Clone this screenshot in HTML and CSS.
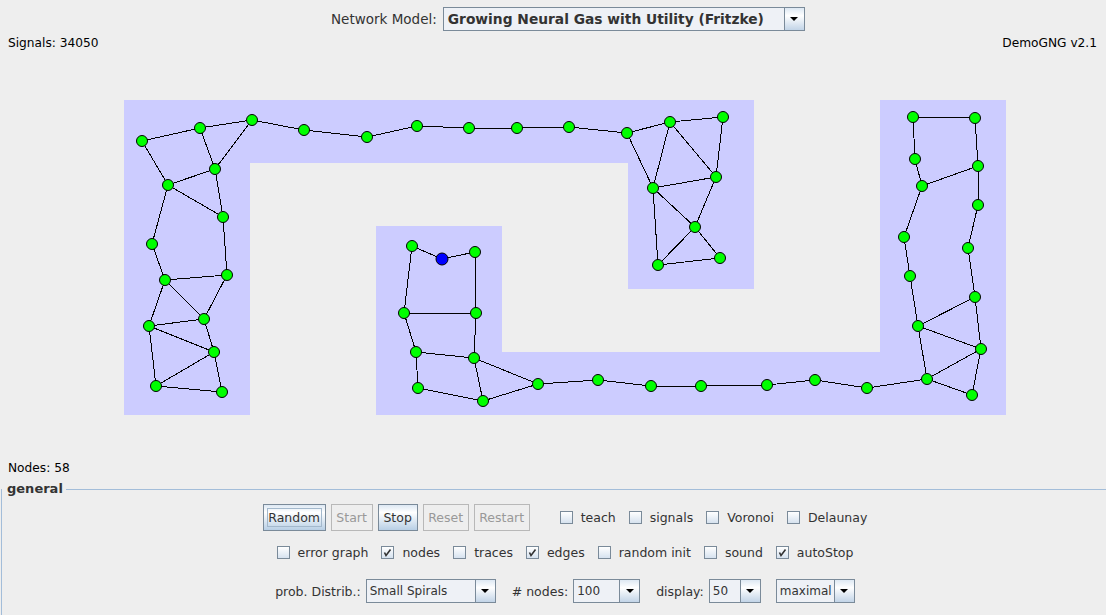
FILE: index.html
```html
<!DOCTYPE html>
<html>
<head>
<meta charset="utf-8">
<link rel="stylesheet" href="styles.css">
</head>
<body>
<div class="topbar">
  <span class="lbl">Network Model:</span>
  <div class="combo combo-main">
    <span class="combo-text bold">Growing Neural Gas with Utility (Fritzke)</span>
    <span class="arrow-btn"><svg width="8" height="4" viewBox="0 0 8 4"><path d="M0 0H8L4 4Z" fill="#000"/></svg></span>
  </div>
</div>

<div class="canvas">
  <div class="canvas-head"><span>Signals: 34050</span><span>DemoGNG v2.1</span></div>
  <svg class="graph" width="1106" height="406" viewBox="0 52 1106 406">
    <g fill="#CCCCFF">
      <rect x="124" y="100" width="126" height="315"/>
      <rect x="124" y="100" width="630" height="63"/>
      <rect x="628" y="100" width="126" height="189"/>
      <rect x="376" y="226" width="126" height="189"/>
      <rect x="376" y="352" width="630" height="63"/>
      <rect x="880" y="100" width="126" height="315"/>
    </g>
    <g class="edges" stroke="#000" stroke-width="1">
      <line x1="142" y1="141" x2="200" y2="128"/>
      <line x1="200" y1="128" x2="252" y2="120"/>
      <line x1="252" y1="120" x2="304" y2="130"/>
      <line x1="304" y1="130" x2="367" y2="137"/>
      <line x1="142" y1="141" x2="168" y2="185"/>
      <line x1="200" y1="128" x2="215" y2="169"/>
      <line x1="252" y1="120" x2="215" y2="169"/>
      <line x1="215" y1="169" x2="168" y2="185"/>
      <line x1="168" y1="185" x2="223" y2="217"/>
      <line x1="215" y1="169" x2="223" y2="217"/>
      <line x1="168" y1="185" x2="152" y2="244"/>
      <line x1="223" y1="217" x2="227" y2="275"/>
      <line x1="152" y1="244" x2="165" y2="280"/>
      <line x1="165" y1="280" x2="227" y2="275"/>
      <line x1="165" y1="280" x2="204" y2="319"/>
      <line x1="227" y1="275" x2="204" y2="319"/>
      <line x1="165" y1="280" x2="149" y2="326"/>
      <line x1="149" y1="326" x2="204" y2="319"/>
      <line x1="204" y1="319" x2="214" y2="352"/>
      <line x1="149" y1="326" x2="214" y2="352"/>
      <line x1="149" y1="326" x2="156" y2="386"/>
      <line x1="156" y1="386" x2="214" y2="352"/>
      <line x1="214" y1="352" x2="222" y2="392"/>
      <line x1="156" y1="386" x2="222" y2="392"/>

      <line x1="367" y1="137" x2="417" y2="126"/>
      <line x1="417" y1="126" x2="469" y2="128"/>
      <line x1="469" y1="128" x2="517" y2="128"/>
      <line x1="517" y1="128" x2="569" y2="127"/>
      <line x1="569" y1="127" x2="627" y2="133"/>
      <line x1="627" y1="133" x2="670" y2="122"/>
      <line x1="670" y1="122" x2="723" y2="117"/>
      <line x1="627" y1="133" x2="653" y2="188"/>
      <line x1="670" y1="122" x2="653" y2="188"/>
      <line x1="670" y1="122" x2="716" y2="177"/>
      <line x1="723" y1="117" x2="716" y2="177"/>
      <line x1="653" y1="188" x2="716" y2="177"/>
      <line x1="653" y1="188" x2="695" y2="227"/>
      <line x1="716" y1="177" x2="695" y2="227"/>
      <line x1="653" y1="188" x2="658" y2="265"/>
      <line x1="695" y1="227" x2="658" y2="265"/>
      <line x1="695" y1="227" x2="720" y2="258"/>
      <line x1="658" y1="265" x2="720" y2="258"/>

      <line x1="412" y1="246" x2="442" y2="259"/>
      <line x1="442" y1="259" x2="475" y2="252"/>
      <line x1="412" y1="246" x2="404" y2="313"/>
      <line x1="475" y1="252" x2="476" y2="313"/>
      <line x1="404" y1="313" x2="476" y2="313"/>
      <line x1="404" y1="313" x2="416" y2="352"/>
      <line x1="476" y1="313" x2="474" y2="358"/>
      <line x1="416" y1="352" x2="474" y2="358"/>
      <line x1="416" y1="352" x2="418" y2="388"/>
      <line x1="474" y1="358" x2="483" y2="401"/>
      <line x1="418" y1="388" x2="483" y2="401"/>
      <line x1="474" y1="358" x2="538" y2="384"/>
      <line x1="483" y1="401" x2="538" y2="384"/>

      <line x1="538" y1="384" x2="598" y2="380"/>
      <line x1="598" y1="380" x2="651" y2="386"/>
      <line x1="651" y1="386" x2="701" y2="386"/>
      <line x1="701" y1="386" x2="767" y2="385"/>
      <line x1="767" y1="385" x2="815" y2="380"/>
      <line x1="815" y1="380" x2="867" y2="388"/>
      <line x1="867" y1="388" x2="927" y2="379"/>

      <line x1="913" y1="117" x2="975" y2="118"/>
      <line x1="913" y1="117" x2="915" y2="159"/>
      <line x1="975" y1="118" x2="978" y2="166"/>
      <line x1="915" y1="159" x2="922" y2="186"/>
      <line x1="978" y1="166" x2="922" y2="186"/>
      <line x1="978" y1="166" x2="978" y2="205"/>
      <line x1="978" y1="205" x2="968" y2="248"/>
      <line x1="922" y1="186" x2="904" y2="237"/>
      <line x1="904" y1="237" x2="910" y2="276"/>
      <line x1="968" y1="248" x2="975" y2="297"/>
      <line x1="910" y1="276" x2="918" y2="326"/>
      <line x1="975" y1="297" x2="918" y2="326"/>
      <line x1="975" y1="297" x2="981" y2="349"/>
      <line x1="918" y1="326" x2="981" y2="349"/>
      <line x1="918" y1="326" x2="927" y2="379"/>
      <line x1="981" y1="349" x2="927" y2="379"/>
      <line x1="981" y1="349" x2="972" y2="395"/>
      <line x1="927" y1="379" x2="972" y2="395"/>
    </g>
    <g class="nodes" fill="#00FF00" stroke="#000" stroke-width="1">
      <circle cx="142" cy="141" r="5.5"/>
      <circle cx="200" cy="128" r="5.5"/>
      <circle cx="252" cy="120" r="5.5"/>
      <circle cx="304" cy="130" r="5.5"/>
      <circle cx="367" cy="137" r="5.5"/>
      <circle cx="215" cy="169" r="5.5"/>
      <circle cx="168" cy="185" r="5.5"/>
      <circle cx="223" cy="217" r="5.5"/>
      <circle cx="152" cy="244" r="5.5"/>
      <circle cx="227" cy="275" r="5.5"/>
      <circle cx="165" cy="280" r="5.5"/>
      <circle cx="204" cy="319" r="5.5"/>
      <circle cx="149" cy="326" r="5.5"/>
      <circle cx="214" cy="352" r="5.5"/>
      <circle cx="156" cy="386" r="5.5"/>
      <circle cx="222" cy="392" r="5.5"/>

      <circle cx="417" cy="126" r="5.5"/>
      <circle cx="469" cy="128" r="5.5"/>
      <circle cx="517" cy="128" r="5.5"/>
      <circle cx="569" cy="127" r="5.5"/>
      <circle cx="627" cy="133" r="5.5"/>
      <circle cx="670" cy="122" r="5.5"/>
      <circle cx="723" cy="117" r="5.5"/>
      <circle cx="653" cy="188" r="5.5"/>
      <circle cx="716" cy="177" r="5.5"/>
      <circle cx="695" cy="227" r="5.5"/>
      <circle cx="658" cy="265" r="5.5"/>
      <circle cx="720" cy="258" r="5.5"/>

      <circle cx="412" cy="246" r="5.5"/>
      <circle cx="475" cy="252" r="5.5"/>
      <circle cx="404" cy="313" r="5.5"/>
      <circle cx="476" cy="313" r="5.5"/>
      <circle cx="416" cy="352" r="5.5"/>
      <circle cx="474" cy="358" r="5.5"/>
      <circle cx="418" cy="388" r="5.5"/>
      <circle cx="483" cy="401" r="5.5"/>
      <circle cx="538" cy="384" r="5.5"/>

      <circle cx="598" cy="380" r="5.5"/>
      <circle cx="651" cy="386" r="5.5"/>
      <circle cx="701" cy="386" r="5.5"/>
      <circle cx="767" cy="385" r="5.5"/>
      <circle cx="815" cy="380" r="5.5"/>
      <circle cx="867" cy="388" r="5.5"/>

      <circle cx="913" cy="117" r="5.5"/>
      <circle cx="975" cy="118" r="5.5"/>
      <circle cx="915" cy="159" r="5.5"/>
      <circle cx="978" cy="166" r="5.5"/>
      <circle cx="922" cy="186" r="5.5"/>
      <circle cx="978" cy="205" r="5.5"/>
      <circle cx="904" cy="237" r="5.5"/>
      <circle cx="968" cy="248" r="5.5"/>
      <circle cx="910" cy="276" r="5.5"/>
      <circle cx="975" cy="297" r="5.5"/>
      <circle cx="918" cy="326" r="5.5"/>
      <circle cx="981" cy="349" r="5.5"/>
      <circle cx="927" cy="379" r="5.5"/>
      <circle cx="972" cy="395" r="5.5"/>
      <circle cx="442" cy="259" r="6" fill="#0000FF"/>
    </g>
  </svg>
  <div class="canvas-foot">Nodes: 58</div>
</div>

<fieldset class="general">
  <legend>general</legend>
  <div class="row row1">
    <div class="btns">
      <button class="btn b-random focus"><span>Random</span></button>
      <button class="btn b-start" disabled>Start</button>
      <button class="btn b-stop">Stop</button>
      <button class="btn b-reset" disabled>Reset</button>
      <button class="btn b-restart" disabled>Restart</button>
    </div>
    <div class="chks first">
      <label class="chk"><span class="box"></span>teach</label>
      <label class="chk"><span class="box"></span>signals</label>
      <label class="chk"><span class="box"></span>Voronoi</label>
      <label class="chk"><span class="box"></span>Delaunay</label>
    </div>
  </div>
  <div class="row row2">
    <div class="chks">
      <label class="chk"><span class="box"></span>error graph</label>
      <label class="chk"><span class="box"><svg width="11" height="11" viewBox="0 0 11 11"><path d="M2.5 5.5L4 8.5L8.5 2.5" fill="none" stroke="#333" stroke-width="1.6"/></svg></span>nodes</label>
      <label class="chk"><span class="box"></span>traces</label>
      <label class="chk"><span class="box"><svg width="11" height="11" viewBox="0 0 11 11"><path d="M2.5 5.5L4 8.5L8.5 2.5" fill="none" stroke="#333" stroke-width="1.6"/></svg></span>edges</label>
      <label class="chk"><span class="box"></span>random init</label>
      <label class="chk"><span class="box"></span>sound</label>
      <label class="chk"><span class="box"><svg width="11" height="11" viewBox="0 0 11 11"><path d="M2.5 5.5L4 8.5L8.5 2.5" fill="none" stroke="#333" stroke-width="1.6"/></svg></span>autoStop</label>
    </div>
  </div>
  <div class="row row3">
    <span class="lbl">prob. Distrib.:</span>
    <div class="combo w-distrib">
      <span class="combo-text">Small Spirals</span>
      <span class="arrow-btn"><svg width="8" height="4" viewBox="0 0 8 4"><path d="M0 0H8L4 4Z" fill="#000"/></svg></span>
    </div>
    <span class="lbl sp"># nodes:</span>
    <div class="combo w-nodes">
      <span class="combo-text">100</span>
      <span class="arrow-btn"><svg width="8" height="4" viewBox="0 0 8 4"><path d="M0 0H8L4 4Z" fill="#000"/></svg></span>
    </div>
    <span class="lbl sp">display:</span>
    <div class="combo w-display">
      <span class="combo-text">50</span>
      <span class="arrow-btn"><svg width="8" height="4" viewBox="0 0 8 4"><path d="M0 0H8L4 4Z" fill="#000"/></svg></span>
    </div>
    <div class="combo w-max sp2">
      <span class="combo-text">maximal</span>
      <span class="arrow-btn"><svg width="8" height="4" viewBox="0 0 8 4"><path d="M0 0H8L4 4Z" fill="#000"/></svg></span>
    </div>
  </div>
</fieldset>
</body>
</html>
```

FILE: styles.css
```css
* { box-sizing: border-box; }
html, body { margin: 0; padding: 0; }
body {
  width: 1106px;
  height: 615px;
  overflow: hidden;
  background: #EEEEEE;
  font-family: "DejaVu Sans", sans-serif;
  font-size: 12.5px;
  color: #333333;
}

.topbar {
  height: 34px;
  display: flex;
  align-items: flex-start;
  padding: 7px 0 0 331px;
  gap: 6px;
  font-size: 13.5px;
}
.topbar .lbl { line-height: 24px; }

.combo {
  display: flex;
  height: 24px;
  border: 1px solid #7A8A99;
  background: #EEF1F6;
}
.combo-text {
  flex: 1;
  display: flex;
  align-items: center;
  padding-left: 3px;
  white-space: nowrap;
  overflow: hidden;
  font-size: 12px;
}
.combo-text.bold { font-weight: bold; padding-left: 4px; font-size: 13.8px; }
.arrow-btn {
  width: 20px;
  flex: none;
  border-left: 1px solid #7A8A99;
  background: linear-gradient(#DDE8F3, #FFFFFF 35%, #C2D4E7);
  display: flex;
  align-items: center;
  justify-content: center;
}
.combo-main { width: 362px; }

.canvas {
  display: flex;
  flex-direction: column;
  color: #000;
  font-size: 12.2px;
}
.canvas-head {
  height: 18px;
  display: flex;
  justify-content: space-between;
  align-items: center;
  padding: 0 9px 0 8px;
}
.graph { display: block; }
.edges { shape-rendering: crispEdges; }
.canvas-foot {
  height: 20px;
  line-height: 20px;
  padding-left: 8px;
}

.general {
  width: 1105px;
  height: 137px;
  margin: 0 0 0 1px;
  padding: 4px 0 0 22px;
  border: 1px solid #A3BDD9;
  border-right: none;
  border-bottom: none;
}
.general legend {
  font-weight: bold;
  font-size: 13px;
  line-height: 22px;
  padding: 0 3px 0 5px;
  margin: 0 0 0 -22px;
}

.row {
  display: flex;
  justify-content: center;
  align-items: center;
}
.row1 { height: 27px; }
.row2 { height: 21px; margin-top: 11px; }
.row3 { height: 24px; margin-top: 16px; }

.btns { display: flex; gap: 5px; }
.btn {
  height: 27px;
  padding: 0;
  text-align: center;
  font: inherit;
  color: #333333;
  border: 1px solid #7A8A99;
  background: linear-gradient(#DDE8F3, #FFFFFF 30%, #B8CFE5);
}
.b-random { width: 63px; }
.b-start { width: 42px; }
.b-stop { width: 40px; }
.b-reset { width: 46px; }
.b-restart { width: 56px; }
.btn:disabled {
  color: #999999;
  border-color: #B8B8B8;
  background: #EEEEEE;
}
.btn.focus { padding: 3px; }
.btn.focus span {
  display: block;
  height: 19px;
  line-height: 17px;
  border: 1px solid #A3B8CC;
}

.chks { display: flex; gap: 13px; }
.chks.first { margin-left: 30px; }
.chk {
  display: flex;
  align-items: center;
  gap: 8px;
  white-space: nowrap;
}
.box {
  width: 13px;
  height: 13px;
  border: 1px solid #7A8A99;
  background: linear-gradient(#FFFFFF, #D6E2EF);
  display: flex;
  align-items: center;
  justify-content: center;
}

.row3 .lbl { margin-right: 5px; }
.row3 .sp { margin-left: 16px; }
.row3 .sp2 { margin-left: 15px; }
.w-distrib { width: 130px; }
.w-nodes { width: 67px; }
.w-display { width: 52px; }
.w-max { width: 79px; }
```
